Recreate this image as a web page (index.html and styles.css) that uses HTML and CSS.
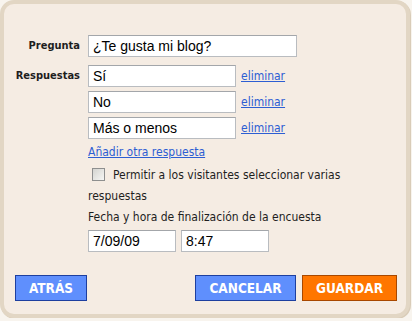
FILE: index.html
```html
<!doctype html>
<html>
<head>
<meta charset="UTF-8">
<title>Encuesta</title>
<link rel="stylesheet" href="styles.css">
</head>
<body>
	<div class="panel">
		<div class="row first">
			<label class="label">Pregunta</label>
			<input type="text" class="field question" value="¿Te gusta mi blog?">
		</div>
		<div class="row answers-row">
			<label class="label">Respuestas</label>
			<div class="answers">
				<div class="answer"><input type="text" class="field answer-input" value="Sí"><a href="#" class="link">eliminar</a></div>
				<div class="answer"><input type="text" class="field answer-input" value="No"><a href="#" class="link">eliminar</a></div>
				<div class="answer"><input type="text" class="field answer-input" value="Más o menos"><a href="#" class="link">eliminar</a></div>
				<a href="#" class="link add">Añadir otra respuesta</a>
				<p class="multi"><input type="checkbox" class="check">Permitir a los visitantes seleccionar varias respuestas</p>
				<p class="end-label">Fecha y hora de finalización de la encuesta</p>
				<div class="dates">
					<input type="text" class="field date" value="7/09/09">
					<input type="text" class="field date" value="8:47">
				</div>
			</div>
		</div>
		<div class="buttons">
			<button class="btn blue back">ATRÁS</button>
			<span class="spacer"></span>
			<button class="btn blue cancel">CANCELAR</button>
			<button class="btn orange save">GUARDAR</button>
		</div>
	</div>
</body>
</html>
```

FILE: styles.css
```css
* {
	box-sizing: border-box;
}
body {
	margin: 0;
	background-color: #f8f4ee;
	font-family: "DejaVu Sans Condensed", "DejaVu Sans", sans-serif;
	font-size: 12px;
	color: #1e1e1e;
}
.panel {
	width: 410px;
	height: 318px;
	background-color: #f5ece3;
	border: 4px solid #e2d6c4;
	border-radius: 14px;
	box-shadow: 1px 1px 0 #d9ccb8;
	padding-top: 31px;
}
.row {
	display: flex;
	align-items: flex-start;
}
.answers-row {
	margin-top: 8px;
}
.label {
	flex: none;
	width: 84px;
	padding-right: 8px;
	text-align: right;
	font-size: 11px;
	font-weight: bold;
	line-height: 22px;
}
.field {
	height: 22px;
	margin: 0;
	padding: 0 4px;
	border: 1px solid #b9bcc0;
	border-top-color: #a3a6aa;
	background-color: #ffffff;
	font-family: "Liberation Sans", Arial, sans-serif;
	font-size: 14px;
	color: #000000;
	outline: none;
}
.question {
	width: 209px;
}
.answers {
	display: flex;
	flex-direction: column;
	align-items: flex-start;
}
.answer {
	display: flex;
	align-items: center;
	margin-bottom: 4px;
}
.answer-input {
	width: 148px;
}
.link {
	color: #2d5ed3;
	font-size: 12px;
	text-decoration: underline;
}
.answer .link {
	margin-left: 5px;
}
.add {
	line-height: 18px;
}
.multi {
	width: 290px;
	margin: 4px 0 0;
	line-height: 21px;
}
.check {
	-webkit-appearance: none;
	appearance: none;
	width: 13px;
	height: 13px;
	margin: 0 8px 0 4px;
	vertical-align: -2px;
	border: 1px solid #8e8f8f;
	background: linear-gradient(135deg, #d4d4d0, #f6f6f4);
}
.end-label {
	margin: 0;
	line-height: 20px;
}
.dates {
	display: flex;
	gap: 5px;
	margin-top: 3px;
}
.date {
	width: 88px;
}
.buttons {
	display: flex;
	margin-top: 23px;
	padding: 0 9px 0 11px;
	gap: 6px;
}
.spacer {
	flex: 1;
}
.btn {
	height: 26px;
	padding: 0;
	font-family: "DejaVu Sans Condensed", "DejaVu Sans", sans-serif;
	font-size: 13.5px;
	font-weight: bold;
	color: #ffffff;
	border: 1px solid;
}
.blue {
	background-color: #5f8ffd;
	border-color: #1d3f9f;
}
.orange {
	background-color: #ff7600;
	border-color: #a84800;
}
.back {
	width: 72px;
}
.cancel {
	width: 101px;
}
.save {
	width: 95px;
}
```
